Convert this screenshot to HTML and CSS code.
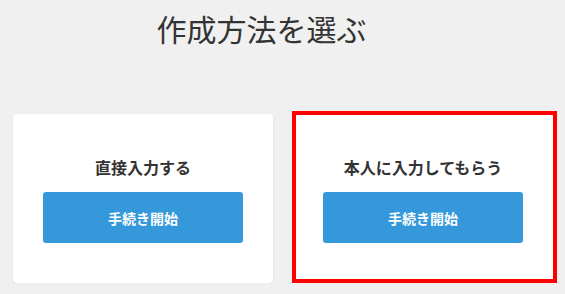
FILE: index.html
```html
<!DOCTYPE html>
<html lang="ja">
<head>
    <meta charset="UTF-8">
    <meta name="viewport" content="width=device-width, initial-scale=1.0">
    <title>作成方法を選ぶ</title>
    <link rel="stylesheet" href="styles.css">
</head>
<body>

    <!-- Title -->
    <h1 class="page-title">作成方法を選ぶ</h1>

    <!-- Method choices -->
    <div class="method-list">
        <div class="method-card">
            <p class="method-label">直接入力する</p>
            <button class="start-btn">手続き開始</button>
        </div>
        <div class="method-card selected">
            <p class="method-label">本人に入力してもらう</p>
            <button class="start-btn">手続き開始</button>
        </div>
    </div>

</body>
</html>
```

FILE: styles.css
```css
/* Global Styles */
body {
    margin: 0;
    font-family: "Noto Sans CJK JP", "Noto Sans", sans-serif;
    background-color: #f0f0f0;
    color: #333;
}

/* Title */
.page-title {
    margin: 0;
    padding: 6px 42px 0 0;
    font-size: 30px;
    font-weight: 400;
    line-height: 45px;
    text-align: center;
    color: #333;
}

/* Card Row */
.method-list {
    display: flex;
    gap: 20px;
    width: 540px;
    margin: 63px 0 0 13px;
}

.method-card {
    position: relative;
    width: 260px;
    height: 169px;
    padding: 41px 0 0;
    box-sizing: border-box;
    background-color: #fff;
    border-radius: 4px;
    box-shadow: 0 1px 2px rgba(0, 0, 0, 0.12);
    display: flex;
    flex-direction: column;
    align-items: center;
}

/* highlight frame */
.method-card.selected::after {
    content: "";
    position: absolute;
    top: -3px;
    left: -1px;
    right: -4px;
    bottom: 0;
    border: 4px solid #ff0000;
}

.method-label {
    margin: 0;
    font-size: 16px;
    font-weight: bold;
    line-height: 24px;
}

.start-btn {
    margin-top: 13px;
    width: 200px;
    height: 51px;
    border: none;
    border-radius: 3px;
    background-color: #3498db;
    color: #fff;
    font-family: inherit;
    font-size: 14px;
    font-weight: bold;
    cursor: pointer;
}
```
